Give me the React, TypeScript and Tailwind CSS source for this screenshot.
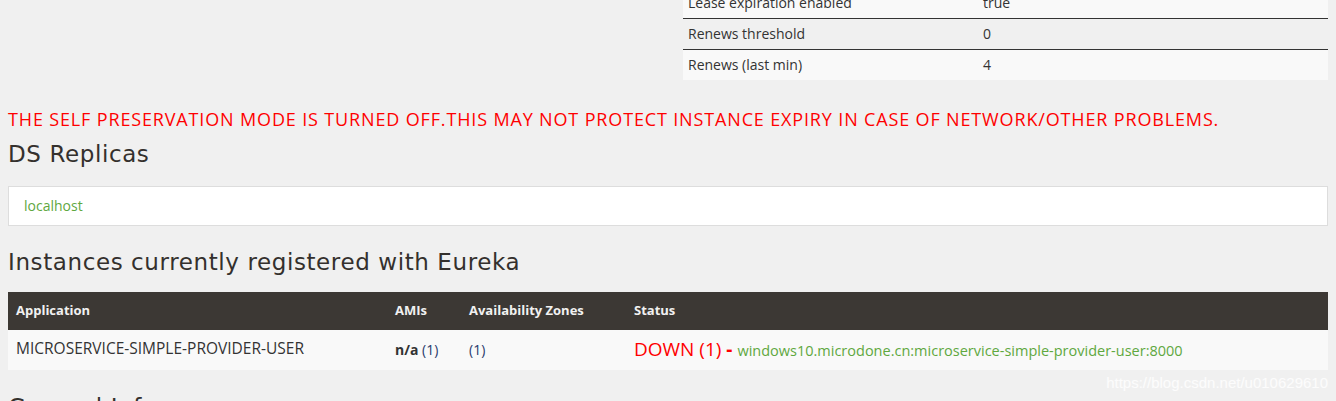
export default function App() {
  const leaseRows = [
    { name: 'Lease expiration enabled', value: 'true', shade: 'bg-[#f9f9f9]' },
    { name: 'Renews threshold', value: '0', shade: 'bg-[#f0f0f0]' },
    { name: 'Renews (last min)', value: '4', shade: 'bg-[#f9f9f9]' },
  ];

  return (
    <div className="relative h-[401px] overflow-hidden bg-[#f0f0f0] text-[#333] font-['Open_Sans',sans-serif]">
      <div className="-mt-[13px] px-2">
        {/* Lease info table, right half */}
        <div className="flex">
          <div className="w-[675px]" />
          <table className="flex-1 border-collapse text-[14px]">
            <tbody>
              {leaseRows.map((r, i) => (
                <tr
                  key={r.name}
                  className={`${r.shade} ${i > 0 ? 'border-t border-[#333]' : ''}`}
                >
                  <td className="h-[31px] w-[295px] px-[5px]">{r.name}</td>
                  <td className="px-[5px]">{r.value}</td>
                </tr>
              ))}
            </tbody>
          </table>
        </div>

        <h4 className="mt-[27px] text-[18px] leading-[24px] tracking-[0.85px] text-[#ff0000]">
          THE SELF PRESERVATION MODE IS TURNED OFF.THIS MAY NOT PROTECT INSTANCE EXPIRY IN CASE OF NETWORK/OTHER PROBLEMS.
        </h4>

        <h1 className="mt-[8px] text-[23px] leading-[30px] tracking-[0.6px] text-[#34302d] font-['DejaVu_Sans',sans-serif]">
          DS Replicas
        </h1>
        <ul className="mt-[17px] border border-[#dddddd] bg-white px-[15px] py-[9px]">
          <li className="text-[14px] leading-[20px] text-[#5fa83f]">localhost</li>
        </ul>

        <h1 className="mt-[21px] text-[23px] leading-[30px] tracking-[0.6px] text-[#34302d] font-['DejaVu_Sans',sans-serif]">
          Instances currently registered with Eureka
        </h1>
        <table className="mt-[15px] w-full border-collapse text-[14px]">
          <thead>
            <tr className="bg-[#3c3834] text-[13px] text-[#f1f1f1]">
              <th className="h-[38px] w-[379px] px-2 text-left font-bold">Application</th>
              <th className="w-[74px] px-2 text-left font-bold">AMIs</th>
              <th className="w-[165px] px-2 text-left font-bold">Availability Zones</th>
              <th className="px-2 text-left font-bold">Status</th>
            </tr>
          </thead>
          <tbody>
            <tr className="bg-[#f9f9f9]">
              <td className="h-[40px] px-2 pb-[2px] text-[15.5px]">MICROSERVICE-SIMPLE-PROVIDER-USER</td>
              <td className="px-2 pb-[2px]">
                <b>n/a</b> <span className="text-[#2a3a6b]">(1)</span>
              </td>
              <td className="px-2 pb-[2px] text-[#2a3a6b]">(1)</td>
              <td className="px-2 pb-[2px]">
                <span className="text-[19px] text-[#ff0000]">
                  DOWN (1) <b>-</b>{' '}
                  <span className="text-[14.5px] text-[#5fa83f]">
                    windows10.microdone.cn:microservice-simple-provider-user:8000
                  </span>
                </span>
              </td>
            </tr>
          </tbody>
        </table>

        <h1 className="mt-[22px] text-[23px] leading-[30px] tracking-[0.6px] text-[#34302d] font-['DejaVu_Sans',sans-serif]">
          General Info
        </h1>
      </div>
      <div className="pointer-events-none absolute right-[8px] top-[372px] text-[15px] text-white/80 font-['Liberation_Sans',sans-serif]">
        https://blog.csdn.net/u010629610
      </div>
    </div>
  );
}
